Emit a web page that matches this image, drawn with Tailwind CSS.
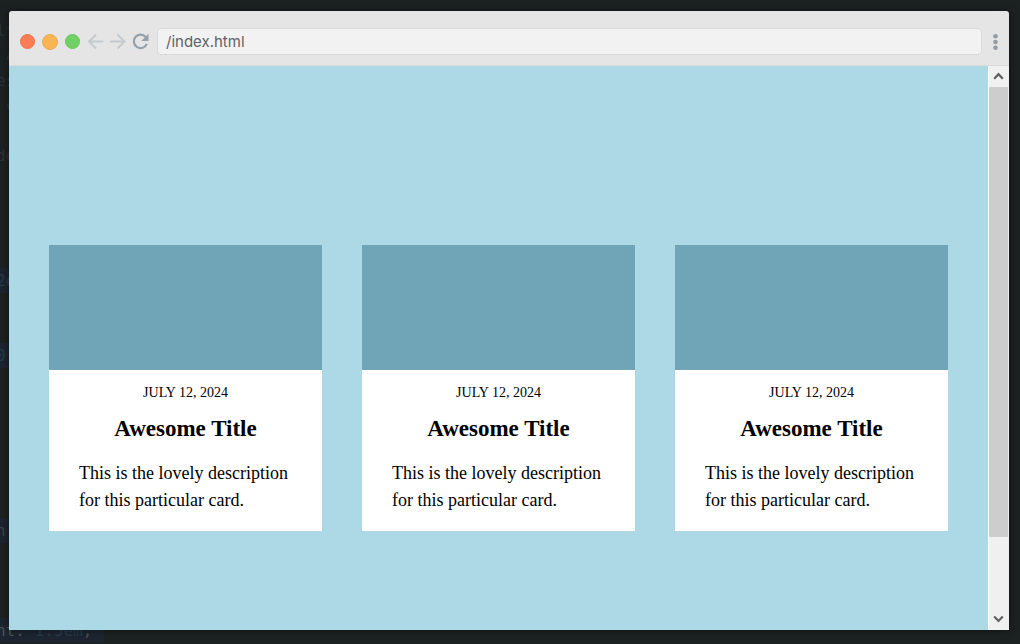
<!DOCTYPE html>
<html lang="en">
<head>
<meta charset="utf-8">
<meta name="viewport" content="width=device-width, initial-scale=1">
<title>/index.html</title>
<script src="https://cdn.jsdelivr.net/npm/@tailwindcss/browser@4"></script>
</head>
<body class="relative h-screen overflow-hidden bg-[#1c2121]">
  <!-- dimmed code editor behind the browser window -->
  <pre class="absolute inset-0 -left-1 pt-[18px] overflow-hidden font-['DejaVu_Sans_Mono',monospace] text-base leading-[25px] text-[#2a3238]" aria-hidden="true">lt
 a
es
 c

do




<span class="inline-block bg-[#1c2530] text-[#263c49]">2e</span>


<span class="inline-block bg-[#1c2530] text-[#263c49]">0 </span>






<span class="inline-block bg-[#1c2530] text-[#3a4248]">n:</span>



<span class="inline-block bg-[#1c2530] pr-3 text-[#4a5358]">nt: <span class="text-[#263c49]">1.5em</span>;</span></pre>

  <div class="relative flex h-full flex-col pt-[11px] pr-[11px] pb-[14px] pl-[9px]">
    <div class="flex min-h-0 flex-1 flex-col overflow-hidden rounded-t-[3px] shadow-[0_0_8px_rgba(0,0,0,0.5)]">
      <header class="flex h-[55px] shrink-0 items-center border-b border-[#d8d8d8] bg-[#e5e5e5] pt-[7px] pr-[11px] pl-[11px]">
        <div class="flex gap-[7px]">
          <button aria-label="Close" class="size-[15px] rounded-full border border-[#f0734c] bg-[#fc7c53]"></button>
          <button aria-label="Minimize" class="size-4 rounded-full border border-[#f0a94a] bg-[#fbb454]"></button>
          <button aria-label="Maximize" class="size-[15px] rounded-full border border-[#69c65c] bg-[#72d165]"></button>
        </div>
        <div class="ml-[5px] flex flex-1 items-center">
          <button aria-label="Back" class="w-[22px]"><svg class="mx-auto" width="18" height="18" viewBox="0 0 18 18" fill="none" stroke="#c5cacf" stroke-width="2"><path d="M16.500 8.500H2.700M9 1.500 2 8.500l7 7"/></svg></button>
          <button aria-label="Forward" class="w-[22px]"><svg class="mx-auto" width="18" height="18" viewBox="0 0 18 18" fill="none" stroke="#c5cacf" stroke-width="2"><path d="M1 8.500h14.300M8.500 1.500l7 7-7 7"/></svg></button>
          <button aria-label="Reload" class="w-6"><svg class="mx-auto" width="18" height="18" viewBox="0 0 18 18"><path d="M13.600 3.900A6.700 6.700 0 1 0 14.800 10.800" fill="none" stroke="#95a0a8" stroke-width="2.200"/><path d="M16.500.8v7.200H9.300z" fill="#95a0a8"/></svg></button>
          <input aria-label="Address" value="/index.html" class="ml-1 h-[27px] min-w-0 flex-1 rounded-[4px] border border-[#dadada] bg-[#f2f2f2] px-2 font-['Inter',sans-serif] text-[15px] text-[#5f6368] outline-none">
          <button aria-label="Menu" class="ml-[11px]"><svg width="5" height="16" viewBox="0 0 5 16" fill="#949ca8"><circle cx="2.500" cy="2.300" r="2.300"/><circle cx="2.500" cy="8" r="2.300"/><circle cx="2.500" cy="13.700" r="2.300"/></svg></button>
        </div>
      </header>

      <div class="flex min-h-0 flex-1">
        <div class="min-w-0 flex-1 overflow-hidden bg-[#add8e6]">
          <main class="grid h-screen grid-cols-3 content-center gap-10 px-10 font-['Liberation_Serif',serif] text-black">
            <article class="bg-white">
              <div class="h-[125px] bg-[#70a4b7]"></div>
              <div class="px-[30px] pt-[13px] pb-[17px]">
                <p class="text-center text-sm leading-5">JULY 12, 2024</p>
                <h2 class="mt-3 text-center text-[23px] leading-7 font-bold">Awesome Title</h2>
                <p class="mt-[17px] text-lg leading-[27px]">This is the lovely description for this particular card.</p>
              </div>
            </article>
            <article class="bg-white">
              <div class="h-[125px] bg-[#70a4b7]"></div>
              <div class="px-[30px] pt-[13px] pb-[17px]">
                <p class="text-center text-sm leading-5">JULY 12, 2024</p>
                <h2 class="mt-3 text-center text-[23px] leading-7 font-bold">Awesome Title</h2>
                <p class="mt-[17px] text-lg leading-[27px]">This is the lovely description for this particular card.</p>
              </div>
            </article>
            <article class="bg-white">
              <div class="h-[125px] bg-[#70a4b7]"></div>
              <div class="px-[30px] pt-[13px] pb-[17px]">
                <p class="text-center text-sm leading-5">JULY 12, 2024</p>
                <h2 class="mt-3 text-center text-[23px] leading-7 font-bold">Awesome Title</h2>
                <p class="mt-[17px] text-lg leading-[27px]">This is the lovely description for this particular card.</p>
              </div>
            </article>
          </main>
        </div>
        <div class="flex w-[21px] shrink-0 flex-col border-l border-white bg-[#f0f0f0]">
          <button aria-label="Scroll up" class="flex h-[21px] items-center justify-center pr-px"><svg width="11" height="9" viewBox="0 0 11 9" fill="none" stroke="#606060" stroke-width="2.200"><path d="M1.200 6.700 5.500 2.200l4.300 4.500"/></svg></button>
          <div class="flex-1 pr-px"><div class="h-[86.200%] bg-[#cdcdcd]"></div></div>
          <button aria-label="Scroll down" class="flex h-[21px] items-center justify-center pr-px"><svg width="11" height="9" viewBox="0 0 11 9" fill="none" stroke="#606060" stroke-width="2.200"><path d="M1.200 1.500 5.500 6l4.300-4.500"/></svg></button>
        </div>
      </div>
    </div>
  </div>
</body>
</html>
